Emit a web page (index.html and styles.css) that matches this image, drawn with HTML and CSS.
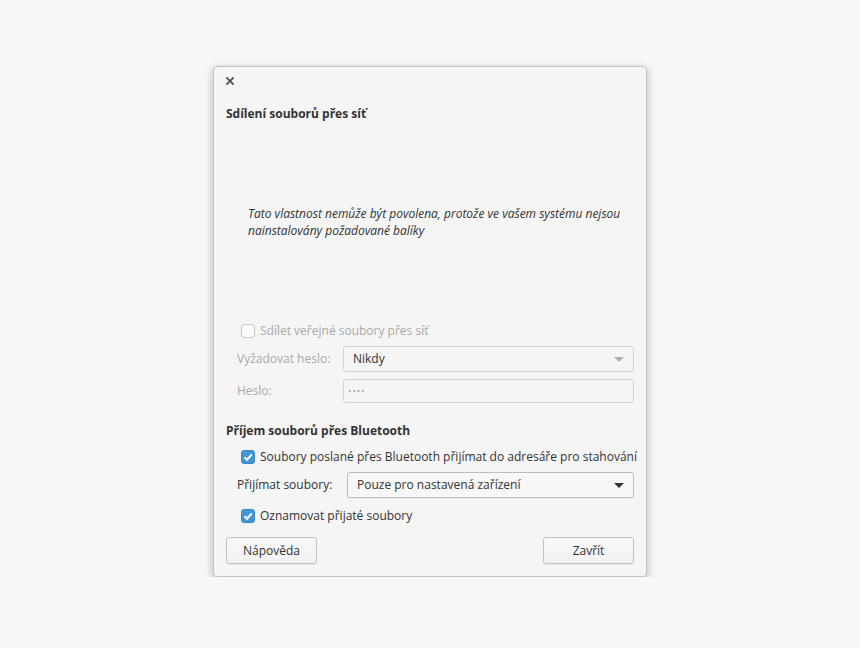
FILE: index.html
```html
<!DOCTYPE html>
<html lang="cs">
<head>
    <meta charset="UTF-8">
    <title>Sdílení souborů</title>
    <link rel="stylesheet" href="styles.css">
</head>
<body>
    <div class="dialog">
        <div class="titlebar">
            <svg class="close" width="8" height="8" viewBox="0 0 8 8">
                <path d="M1 1 L7 7 M7 1 L1 7" stroke="#555" stroke-width="1.8" stroke-linecap="square"/>
            </svg>
        </div>

        <div class="content">
            <h2 class="section-title">Sdílení souborů přes síť</h2>

            <div class="notice">
                Tato vlastnost nemůže být povolena, protože ve vašem systému nejsou nainstalovány požadované balíky
            </div>

            <label class="check disabled">
                <span class="box"></span>
                Sdílet veřejné soubory přes síť
            </label>

            <div class="row disabled">
                <span class="label">Vyžadovat heslo:</span>
                <div class="combo">
                    <span>Nikdy</span>
                    <span class="arrow"></span>
                </div>
            </div>

            <div class="row disabled">
                <span class="label">Heslo:</span>
                <div class="entry">••••</div>
            </div>

            <h2 class="section-title bt">Příjem souborů přes Bluetooth</h2>

            <label class="check">
                <span class="box checked">
                    <svg width="12" height="12" viewBox="0 0 12 12"><path d="M2.5 6.2 L5 8.7 L9.8 3.3" fill="none" stroke="#fff" stroke-width="2"/></svg>
                </span>
                Soubory poslané přes Bluetooth přijímat do adresáře pro stahování
            </label>

            <div class="row">
                <span class="label">Přijímat soubory:</span>
                <div class="combo active">
                    <span>Pouze pro nastavená zařízení</span>
                    <span class="arrow"></span>
                </div>
            </div>

            <label class="check">
                <span class="box checked">
                    <svg width="12" height="12" viewBox="0 0 12 12"><path d="M2.5 6.2 L5 8.7 L9.8 3.3" fill="none" stroke="#fff" stroke-width="2"/></svg>
                </span>
                Oznamovat přijaté soubory
            </label>
        </div>

        <div class="buttons">
            <button class="btn">Nápověda</button>
            <button class="btn">Zavřít</button>
        </div>
    </div>
</body>
</html>
```

FILE: styles.css
```css
body {
    margin: 0;
    padding: 0;
    background-color: #f7f7f7;
    font-family: "Open Sans", sans-serif;
    font-size: 12px;
    line-height: 18px;
    color: #333;
}

.dialog {
    width: 432px;
    height: 509px;
    margin: 66px 0 0 213px;
    background: #f5f5f5;
    border: 1px solid #c4c4c4;
    border-radius: 4px;
    box-shadow: 0 3px 10px rgba(0, 0, 0, 0.28);
    display: flex;
    flex-direction: column;
}

.titlebar {
    height: 26px;
    padding: 10px 0 0 12px;
    box-sizing: border-box;
}

.close {
    display: block;
}

.content {
    padding: 0 12px;
    flex: 1;
}

.section-title {
    margin: 12px 0 0 0;
    font-size: 12px;
    font-weight: bold;
    color: #333;
    line-height: 18px;
}

.section-title.bt {
    margin-top: 19px;
}

.notice {
    margin: 82px 0 0 22px;
    font-style: italic;
    line-height: 17px;
    color: #333;
}

.check {
    display: flex;
    align-items: center;
    gap: 5px;
    margin-left: 15px;
    height: 18px;
    white-space: nowrap;
}

.check.disabled {
    margin-top: 83px;
    color: #a9a9a9;
}

.box {
    width: 12px;
    height: 12px;
    border: 1px solid #c9c9c9;
    border-radius: 3px;
    background: #fafafa;
    display: flex;
    align-items: center;
    justify-content: center;
}

.box.checked {
    background: #4195d9;
    border-color: #3a86c6;
}

.row {
    display: flex;
    align-items: center;
    margin: 5px 0 0 11px;
}

.row.disabled {
    color: #a9a9a9;
}

.row.disabled + .row.disabled {
    margin-top: 7px;
}

.label {
    width: 106px;
    flex-shrink: 0;
}

.combo,
.entry {
    flex: 1;
    height: 24px;
    border: 1px solid #d3d3d3;
    border-radius: 3px;
    background: #f5f5f5;
    display: flex;
    align-items: center;
    padding: 0 9px;
}

.combo {
    justify-content: space-between;
    color: #333;
}

.entry {
    height: 22px;
    padding: 0 4px;
    font-size: 9px;
    letter-spacing: 1px;
    color: #aaa;
}

.arrow {
    width: 0;
    height: 0;
    border-left: 5px solid transparent;
    border-right: 5px solid transparent;
    border-top: 5px solid #b0b0b0;
}

.combo.active {
    background: #f7f7f7;
    border-color: #bdbdbd;
    margin-left: 4px;
    box-shadow: 0 1px 1px rgba(0, 0, 0, 0.05);
}

.combo.active .arrow {
    border-top-color: #333;
}

.section-title + .check {
    margin-top: 8px;
}

.row + .check {
    margin-top: 9px;
}

.check + .row {
    margin-top: 6px;
}

.buttons {
    display: flex;
    justify-content: space-between;
    padding: 0 12px 12px 12px;
}

.btn {
    width: 91px;
    height: 27px;
    font-family: "Open Sans", sans-serif;
    font-size: 12px;
    color: #333;
    background: linear-gradient(#f9f9f9, #f1f1f1);
    border: 1px solid #c2c2c2;
    border-radius: 3px;
    box-shadow: 0 1px 1px rgba(0, 0, 0, 0.06);
}
```
